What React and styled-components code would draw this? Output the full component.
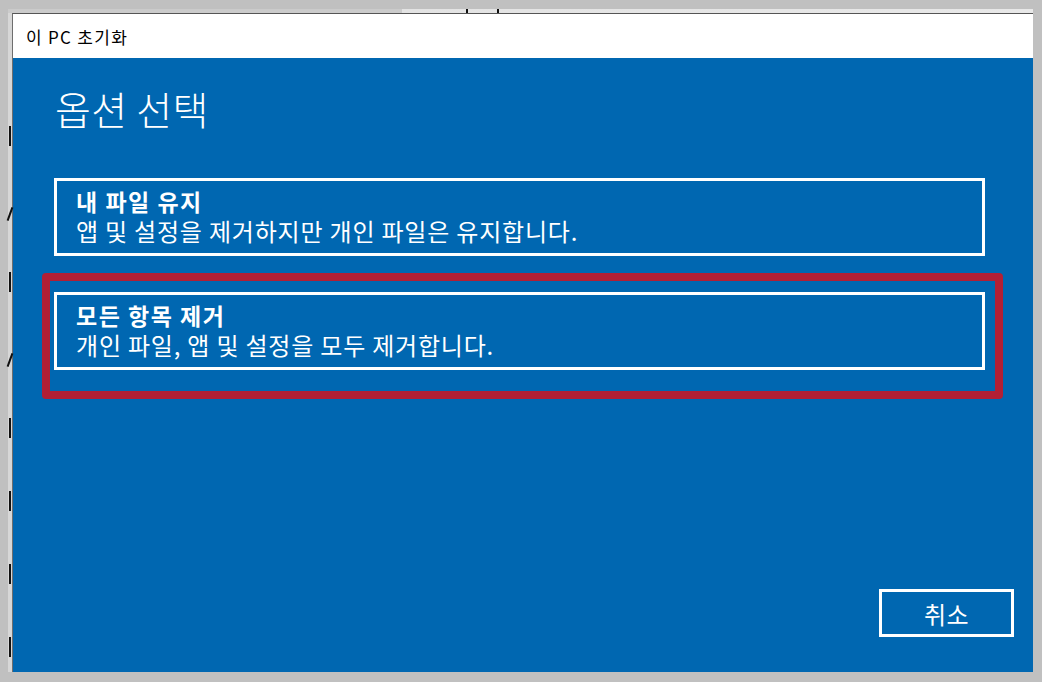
import React from "react";
import styled, { createGlobalStyle } from "styled-components";

const GlobalStyle = createGlobalStyle`
  html, body { margin: 0; padding: 0; background: #c0c0c0; }
  * { box-sizing: border-box; }
`;

const Desktop = styled.div`
  width: 1042px;
  height: 682px;
  background: #c0c0c0;
  padding: 9px 9px 10px 8px;
  overflow: hidden;
  font-family: "Noto Sans CJK KR", "Noto Sans", sans-serif;
`;

const BackWindow = styled.div`
  position: relative;
  height: 100%;
  display: grid;
  grid-template-columns: 4px 1fr;
  grid-template-rows: 4px 1fr;
`;

const BackTopEdge = styled.div`
  grid-column: 1 / 3;
  position: relative;
  background: linear-gradient(to right, #cbcbcb 0, #cbcbcb 394px, #e3e3e3 394px, #e8e8e8 100%);
`;

const BackLeftEdge = styled.div`
  background: #d7d7d7;
  display: flex;
  flex-direction: column;
  align-items: center;
  padding-top: 113px;
  gap: 51px;
`;

const TickSlot = styled.div`
  height: 22px;
  display: flex;
  align-items: ${(p) => (p.$slant ? "flex-end" : "flex-start")};
  justify-content: center;
`;

const Tick = styled.span`
  display: block;
  width: 2px;
  height: ${(p) => p.$h || 20}px;
  background: #111;
  transform: ${(p) => (p.$slant ? "rotate(20deg)" : "none")};
`;

const TopTick = styled.span`
  position: absolute;
  top: 0;
  left: ${(p) => p.$x}px;
  width: 2px;
  height: 4px;
  background: #111;
`;

const Window = styled.div`
  display: flex;
  flex-direction: column;
  border-top: 1px solid #555;
  border-left: 1px solid #6e6e6e;
  min-height: 0;
`;

const TitleBar = styled.div`
  height: 44px;
  background: #fff;
  display: flex;
  align-items: center;
  padding-left: 13px;
  font-size: 17px;
  letter-spacing: 1.3px;
  color: #000;
  flex-shrink: 0;
`;

const Content = styled.div`
  flex: 1;
  background: #0067b1;
  color: #fff;
  display: flex;
  flex-direction: column;
  padding: 24px 48px 35px 41px;
`;

const Heading = styled.h1`
  margin: 0 0 0 1px;
  font-size: 39px;
  font-weight: 300;
  line-height: 52px;
  height: 52px;
  letter-spacing: 0.3px;
`;

const OptionList = styled.div`
  display: flex;
  flex-direction: column;
  gap: 36px;
  margin-top: 44px;
`;

const OptionWrap = styled.div`
  position: relative;
`;

const OptionBox = styled.div`
  border: 3px solid #fff;
  height: 78px;
  padding: 5px 20px 0 19px;
  display: flex;
  flex-direction: column;
`;

const OptionTitle = styled.div`
  font-size: 23px;
  font-weight: 700;
  line-height: 30px;
  letter-spacing: 1.5px;
`;

const OptionDesc = styled.div`
  font-size: 24px;
  font-weight: 400;
  line-height: 30px;
  letter-spacing: 0.8px;
`;

const Highlight = styled.div`
  position: absolute;
  top: -19px;
  left: -12px;
  right: -18px;
  bottom: -29px;
  border: 8px solid #b21f35;
  border-radius: 4px;
  pointer-events: none;
`;

const Footer = styled.div`
  margin-top: auto;
  display: flex;
  justify-content: flex-end;
  margin-right: -29px;
`;

const CancelButton = styled.button`
  width: 135px;
  height: 48px;
  background: transparent;
  border: 3px solid #fff;
  color: #fff;
  font-family: inherit;
  font-size: 24px;
  letter-spacing: 0.5px;
  padding: 0;
  cursor: pointer;
`;

const options = [
  { title: "내 파일 유지", desc: "앱 및 설정을 제거하지만 개인 파일은 유지합니다." },
  { title: "모든 항목 제거", desc: "개인 파일, 앱 및 설정을 모두 제거합니다.", highlighted: true },
];

const ticks = [false, true, false, true, false, false, false, false];

export default function App() {
  return (
    <>
      <GlobalStyle />
      <Desktop>
        <BackWindow>
          <BackTopEdge>
            <TopTick $x={458} />
            <TopTick $x={489} />
          </BackTopEdge>
          <BackLeftEdge>
            {ticks.map((slant, i) => (
              <TickSlot key={i} $slant={slant}>
                <Tick $slant={slant} $h={slant ? 14 : 20} />
              </TickSlot>
            ))}
          </BackLeftEdge>
          <Window>
            <TitleBar>이 PC 초기화</TitleBar>
            <Content>
              <Heading>옵션 선택</Heading>
              <OptionList>
                {options.map((o) => (
                  <OptionWrap key={o.title}>
                    <OptionBox>
                      <OptionTitle>{o.title}</OptionTitle>
                      <OptionDesc>{o.desc}</OptionDesc>
                    </OptionBox>
                    {o.highlighted && <Highlight />}
                  </OptionWrap>
                ))}
              </OptionList>
              <Footer>
                <CancelButton>취소</CancelButton>
              </Footer>
            </Content>
          </Window>
        </BackWindow>
      </Desktop>
    </>
  );
}
